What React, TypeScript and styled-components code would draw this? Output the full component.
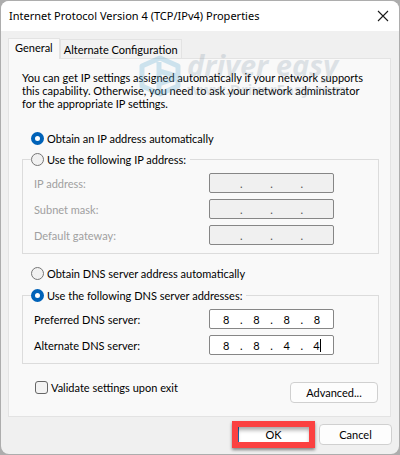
import React, { useState } from 'react';
import styled, { createGlobalStyle } from 'styled-components';

const GlobalStyle = createGlobalStyle`
  *, *::before, *::after { box-sizing: border-box; }
  body {
    margin: 0;
    padding: 1px;
    background: #adadad;
    color: #000;
    font: 11px/13px Lato, "Noto Sans", sans-serif;
  }
  button, input { font: inherit; color: inherit; }
`;

const Dialog = styled.section`
  position: relative;
  display: flex;
  flex-direction: column;
  background: #f0f0f0;
  border-radius: 8px;
  overflow: hidden;
`;

const TitleBar = styled.header`
  display: flex;
  align-items: center;
  justify-content: space-between;
  height: 30px;
  padding: 0 8px;
  background: #fff;
`;

const Title = styled.h1`
  margin: 0;
  font: 11px/16px "Noto Sans", sans-serif;
`;

const CloseButton = styled.button`
  display: flex;
  align-items: center;
  justify-content: center;
  width: 16px;
  height: 16px;
  padding: 0;
  border: 0;
  background: none;
`;

const Body = styled.div`
  padding: 7px 8px 0 7px;
`;

const TabList = styled.div`
  display: flex;
  align-items: flex-end;
`;

const Tab = styled.button<{ $active?: boolean }>`
  position: relative;
  z-index: ${p => (p.$active ? 1 : 0)};
  height: ${p => (p.$active ? 21 : 19)}px;
  margin-bottom: ${p => (p.$active ? -1 : 0)}px;
  padding: ${p => (p.$active ? '0 6px 3px' : '1px 3px 0')};
  border: 1px solid #e3e3e3;
  border-bottom: 0;
  background: ${p => (p.$active ? '#f9f9f9' : '#f2f2f2')};
  white-space: nowrap;
`;

const Panel = styled.div`
  padding: 12px 11px 13px 13px;
  border: 1px solid #e3e3e3;
  background: #f9f9f9;
`;

const Intro = styled.p`
  margin: 0 0 21px;
`;

const Choice = styled.label`
  display: flex;
  align-items: center;
  gap: 3px;
  height: 14px;
`;

const LooseChoice = styled(Choice)`
  margin: 0 0 7px 9px;

  fieldset + & {
    margin-top: 12px;
    margin-bottom: 8px;
  }
`;

const Radio = styled.input.attrs({ type: 'radio' })`
  appearance: none;
  width: 13px;
  height: 13px;
  margin: 0;
  border: 1px solid #767676;
  border-radius: 50%;
  background: #f1f1f1;
  &:checked {
    border: 4px solid #0062b8;
    background: #fff;
  }
`;

const Group = styled.fieldset`
  min-width: 0;
  margin: 0;
  padding: 0 44px 8px 11px;
  border: 1px solid #dcdcdc;
`;

const Legend = styled.legend`
  margin-left: -3px;
  padding: 0 4px 0 0;
`;

const Rows = styled.div`
  display: flex;
  flex-direction: column;
  gap: 6px;
  padding-top: 7px;
`;

const Row = styled.div<{ $disabled?: boolean }>`
  display: flex;
  align-items: center;
  justify-content: space-between;
  color: ${p => (p.$disabled ? '#a0a0a0' : '#000')};
`;

const AddressBox = styled.div<{ $disabled?: boolean }>`
  display: flex;
  align-items: center;
  width: 125px;
  height: 20px;
  padding: 0 3px;
  border: 1px solid #868686;
  border-radius: 2px;
  background: ${p => (p.$disabled ? '#f0f0f0' : '#fff')};
  color: ${p => (p.$disabled ? '#555' : '#000')};
`;

const Part = styled.span`
  display: flex;
  flex: 1;
  align-items: center;
  justify-content: center;
  min-width: 0;
`;

const Octet = styled.input`
  width: 100%;
  min-width: 0;
  padding: 0;
  border: 0;
  background: none;
  text-align: center;
  outline: none;
`;

const ShortOctet = styled(Octet)`
  width: 7px;
`;

const Dot = styled.span`
  width: 4px;
  text-align: center;
`;

const Caret = styled.span`
  width: 1px;
  height: 13px;
  background: #000;
`;

const PanelFooter = styled.div`
  display: flex;
  align-items: flex-start;
  justify-content: space-between;
  padding: 16px 1px 0 13px;
`;

const Checkbox = styled.input.attrs({ type: 'checkbox' })`
  appearance: none;
  width: 13px;
  height: 13px;
  margin: 0;
  border: 1px solid #666;
  border-radius: 3px;
  background: #f3f3f3;
`;

const Button = styled.button<{ $wide?: boolean }>`
  width: ${p => (p.$wide ? 88 : 73)}px;
  height: 21px;
  padding: 0;
  border: 1px solid #d0d0d0;
  border-radius: 4px;
  background: #fdfdfd;
`;

const AdvancedButton = styled(Button)`
  margin-top: 2px;
`;

const Actions = styled.footer`
  display: flex;
  align-items: center;
  justify-content: flex-end;
  gap: 4px;
  padding: 4px 7px 6px;
`;

const OkButton = styled.button`
  width: 83px;
  height: 27px;
  padding: 0;
  border: 6px solid #fb4141;
  background: #fff;
  box-shadow: 0 2px 3px rgba(0, 0, 0, 0.45), inset 0 4px 4px -1px rgba(0, 0, 0, 0.35), inset 1px 0 0 #1c6fb5;
`;

const Watermark = styled.div`
  position: absolute;
  top: 48px;
  left: 136px;
  display: flex;
  align-items: flex-end;
  gap: 4px;
  pointer-events: none;
  z-index: 2;
`;

const Brand = styled.div`
  display: flex;
  flex-direction: column;
  opacity: 0.2;
  color: #6f8598;
  font-family: "Open Sans", sans-serif;
  font-weight: 700;
  white-space: nowrap;
`;

const BrandName = styled.span`
  font-size: 29px;
  line-height: 32px;
  font-style: italic;
`;

const BrandSite = styled.span`
  font-size: 15px;
  line-height: 17px;
`;

type AddressProps = { id: string; label: string; parts: string[]; disabled?: boolean; caret?: boolean };

function AddressRow({ id, label, parts, disabled, caret }: AddressProps) {
  return (
    <Row $disabled={disabled}>
      <label htmlFor={id}>{label}</label>
      <AddressBox $disabled={disabled}>
        {parts.map((part, i) => {
          const focused = caret && i === 3;
          const Field = focused ? ShortOctet : Octet;
          return (
            <React.Fragment key={i}>
              {i > 0 && <Dot>.</Dot>}
              <Part>
                <Field
                  id={i === 0 ? id : undefined}
                  aria-label={i === 0 ? undefined : `${label} ${i + 1}`}
                  defaultValue={part}
                  disabled={disabled}
                  maxLength={3}
                />
                {focused && <Caret />}
              </Part>
            </React.Fragment>
          );
        })}
      </AddressBox>
    </Row>
  );
}

const blank = ['', '', '', ''];

export default function App() {
  const [autoIp, setAutoIp] = useState(true);
  const [autoDns, setAutoDns] = useState(false);
  return (
    <>
      <GlobalStyle />
      <Dialog role="dialog" aria-labelledby="title">
        <TitleBar>
          <Title id="title">Internet Protocol Version 4 (TCP/IPv4) Properties</Title>
          <CloseButton aria-label="Close">
            <svg width="12" height="12" viewBox="0 0 12 12" fill="none" stroke="#1a1a1a" strokeWidth="1.1">
              <path d="M1 1l10 10M11 1L1 11" />
            </svg>
          </CloseButton>
        </TitleBar>
        <Body>
          <TabList role="tablist">
            <Tab role="tab" aria-selected $active>General</Tab>
            <Tab role="tab" aria-selected={false}>Alternate Configuration</Tab>
          </TabList>
          <Panel role="tabpanel">
            <Intro>
              You can get IP settings assigned automatically if your network supports
              <br />
              this capability. Otherwise, you need to ask your network administrator
              <br />
              for the appropriate IP settings.
            </Intro>
            <LooseChoice>
              <Radio name="ip" checked={autoIp} onChange={() => setAutoIp(true)} />
              Obtain an IP address automatically
            </LooseChoice>
            <Group>
              <Legend>
                <Choice>
                  <Radio name="ip" checked={!autoIp} onChange={() => setAutoIp(false)} />
                  Use the following IP address:
                </Choice>
              </Legend>
              <Rows>
                <AddressRow id="ip-address" label="IP address:" parts={blank} disabled={autoIp} />
                <AddressRow id="subnet" label="Subnet mask:" parts={blank} disabled={autoIp} />
                <AddressRow id="gateway" label="Default gateway:" parts={blank} disabled={autoIp} />
              </Rows>
            </Group>
            <LooseChoice>
              <Radio name="dns" checked={autoDns} onChange={() => setAutoDns(true)} />
              Obtain DNS server address automatically
            </LooseChoice>
            <Group>
              <Legend>
                <Choice>
                  <Radio name="dns" checked={!autoDns} onChange={() => setAutoDns(false)} />
                  Use the following DNS server addresses:
                </Choice>
              </Legend>
              <Rows>
                <AddressRow id="dns-1" label="Preferred DNS server:" parts={['8', '8', '8', '8']} disabled={autoDns} />
                <AddressRow id="dns-2" label="Alternate DNS server:" parts={['8', '8', '4', '4']} disabled={autoDns} caret />
              </Rows>
            </Group>
            <PanelFooter>
              <Choice>
                <Checkbox />
                Validate settings upon exit
              </Choice>
              <AdvancedButton $wide>Advanced...</AdvancedButton>
            </PanelFooter>
          </Panel>
        </Body>
        <Actions>
          <OkButton>OK</OkButton>
          <Button>Cancel</Button>
        </Actions>
        <Watermark aria-hidden>
          <svg width="46" height="44" viewBox="0 0 46 44" fill="none" stroke="#65abd0" strokeOpacity="0.3" strokeWidth="5" strokeLinejoin="round">
            <path d="M23 4L41 12V32L23 40L5 32V12ZM22 8V37M22 17L39 22M22 30L39 24" />
          </svg>
          <Brand>
            <BrandName>driver easy</BrandName>
            <BrandSite>www.DriverEasy.com</BrandSite>
          </Brand>
        </Watermark>
      </Dialog>
    </>
  );
}
